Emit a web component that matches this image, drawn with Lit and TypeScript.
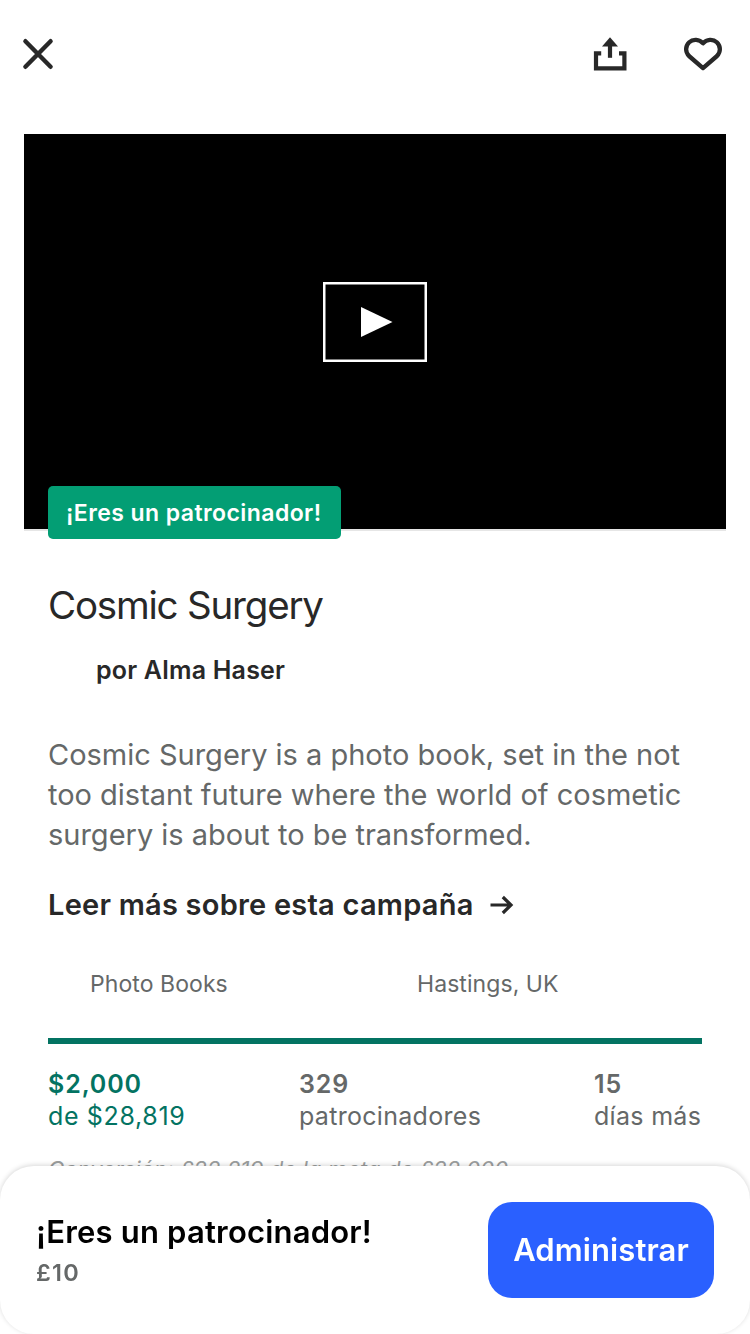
import { LitElement, html, css, svg } from "lit";
import { customElement, property } from "lit/decorators.js";

interface Stat {
  value: string;
  label: string;
  tone: string;
}

const STATS: Stat[] = [
  { value: "$2,000", label: "de $28,819", tone: "pledged" },
  { value: "329", label: "patrocinadores", tone: "backers" },
  { value: "15", label: "días más", tone: "days" },
];

const closeIcon = svg`<path d="M3.4 3.2L28.6 28.8M28.6 3.2L3.4 28.8" fill="none" stroke="#282828" stroke-width="4.4" stroke-linecap="round"/>`;

@customElement("app-header")
export class AppHeader extends LitElement {
  static styles = css`
    :host { display: block; height: 134px; }
    .bar { display: flex; align-items: flex-start; padding: 36px 26px 0 22px; }
    .close { margin-top: 2px; }
    .share { margin-left: auto; }
    .heart { margin-left: 54px; }
    svg { display: block; }
  `;
  render() {
    return html`<div class="bar">
      <svg class="close" width="32" height="32" viewBox="0 0 32 32">${closeIcon}</svg>
      <svg class="share" width="36" height="36" viewBox="0 0 36 36">
        <path d="M9.2 17.4H4V32.4H32.4V17.4H27" fill="none" stroke="#282828" stroke-width="4.2"/>
        <path d="M18 21.8V8" fill="none" stroke="#282828" stroke-width="4.2"/>
        <path d="M18 1.3L26 10.5H10Z" fill="#282828"/>
      </svg>
      <svg class="heart" width="42" height="36" viewBox="0 0 42 36">
        <path d="M21 7.2C17.4 3.2 11 2.7 7.2 6.3C3.2 10.2 3.1 16 7 20L21 32.1L35 20C38.9 16 38.8 10.2 34.8 6.3C31 2.7 24.6 3.2 21 7.2Z" fill="none" stroke="#282828" stroke-width="4.3" stroke-linejoin="round"/>
      </svg>
    </div>`;
  }
}

@customElement("project-video")
export class ProjectVideo extends LitElement {
  @property() badge = "";
  static styles = css`
    :host { display: block; position: relative; margin: 0 24px; }
    .screen {
      height: 395px; background: #000; border-bottom: 2px solid #e6e6e6;
      display: flex; align-items: center; justify-content: center;
    }
    .play { display: block; margin-top: -19px; }
    .badge {
      position: absolute; left: 24px; bottom: -8px; width: 293px; height: 53px;
      box-sizing: border-box; padding-left: 18px; border-radius: 5px;
      background: #039e74; color: #fff; font-size: 23px; font-weight: 600;
      line-height: 54px; letter-spacing: 0.43px; white-space: nowrap;
    }
  `;
  render() {
    return html`
      <div class="screen">
        <svg class="play" width="104" height="80" viewBox="0 0 104 80">
          <rect x="1.25" y="1.25" width="101.5" height="77.5" fill="none" stroke="#fff" stroke-width="2.5"/>
          <path d="M38 25L69.5 40L38 55Z" fill="#fff"/>
        </svg>
      </div>
      <div class="badge">${this.badge}</div>`;
  }
}

@customElement("pledge-sheet")
export class PledgeSheet extends LitElement {
  static styles = css`
    :host { display: block; position: fixed; left: 0; right: 0; bottom: 0; }
    .sheet {
      display: flex; align-items: center; justify-content: space-between;
      height: 168px; box-sizing: border-box; padding: 0 36px;
      background: #fff; border-radius: 34px; box-shadow: 0 -1px 5px rgba(0, 0, 0, 0.16);
    }
    .title { font-size: 31px; font-weight: 600; line-height: 40px; letter-spacing: 0.2px; color: #000; }
    .amount { font-size: 23.5px; font-weight: 600; line-height: 32px; letter-spacing: 1.3px; margin-top: 5px; color: #656868; }
    .info { padding-top: 1px; }
    .manage {
      width: 226px; height: 96px; border: 0; padding: 0; border-radius: 24px;
      background: #2a60ff; color: #fff; font: 600 31px/96px Inter, sans-serif; letter-spacing: 0.1px;
    }
  `;
  render() {
    return html`<div class="sheet">
      <div class="info">
        <div class="title">¡Eres un patrocinador!</div>
        <div class="amount">£10</div>
      </div>
      <button class="manage">Administrar</button>
    </div>`;
  }
}

@customElement("app-root")
export class AppRoot extends LitElement {
  static styles = css`
    :host {
      display: block; height: 1334px; overflow: hidden; background: #fff;
      font-family: Inter, sans-serif; color: #282828;
    }
    .content { padding: 50px 48px 0; white-space: nowrap; }
    .name { margin: 0; font-size: 38.5px; font-weight: 400; line-height: 48px; letter-spacing: -1.2px; }
    .author { margin: 25px 0 0 48px; font-size: 25px; font-weight: 600; line-height: 32px; letter-spacing: 0.2px; }
    .blurb { margin: 49px 0 0; font-size: 29px; line-height: 40px; letter-spacing: -0.01px; color: #656868; }
    .more { display: flex; align-items: center; margin-top: 30px; font-size: 29px; font-weight: 600; line-height: 40px; letter-spacing: 0.23px; }
    .arrow { margin-left: 16px; }
    .tags { display: grid; grid-template-columns: 327px 1fr; padding-left: 42px; margin-top: 45px; font-size: 23px; line-height: 28px; letter-spacing: 0.07px; color: #656868; }
    .progress { height: 6px; margin-top: 40px; background: #037362; }
    .stats { display: grid; grid-template-columns: 251px 295px auto; margin-top: 24px; font-size: 25px; line-height: 32px; color: #656868; }
    .value { font-weight: 600; letter-spacing: 0.9px; }
    .label { letter-spacing: 0.3px; }
    .pledged { color: #037362; }
    .pledged .label { letter-spacing: 0.65px; }
    .conversion { margin-top: 23px; font-size: 22px; font-style: italic; line-height: 28px; letter-spacing: 0.12px; color: #9b9e9e; }
  `;
  render() {
    return html`
      <app-header></app-header>
      <project-video badge="¡Eres un patrocinador!"></project-video>
      <div class="content">
        <h1 class="name">Cosmic Surgery</h1>
        <div class="author">por Alma Haser</div>
        <p class="blurb">
          Cosmic Surgery is a photo book, set in the not<br />
          too distant future where the world of cosmetic<br />
          surgery is about to be transformed.
        </p>
        <div class="more">
          <span>Leer más sobre esta campaña</span>
          <svg class="arrow" width="24" height="20" viewBox="0 0 24 20">
            <path d="M.5 10H21M12.8 2L21 10L12.8 18" fill="none" stroke="#282828" stroke-width="3.2"/>
          </svg>
        </div>
        <div class="tags"><span>Photo Books</span><span>Hastings, UK</span></div>
        <div class="progress"></div>
        <div class="stats">
          ${STATS.map((s) => html`<div class=${s.tone}><div class="value">${s.value}</div><div class="label">${s.label}</div></div>`)}
        </div>
        <div class="conversion">Conversión: £22,219 de la meta de £22,000</div>
      </div>
      <pledge-sheet></pledge-sheet>
    `;
  }
}
